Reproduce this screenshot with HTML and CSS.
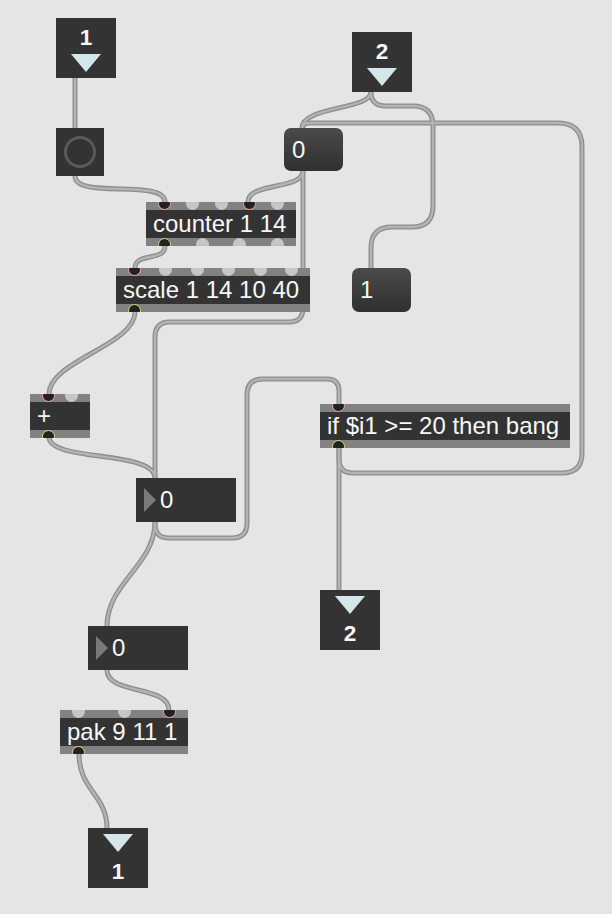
FILE: index.html
```html
<!DOCTYPE html>
<html>
<head>
<meta charset="utf-8">
<title>Patcher</title>
<link rel="stylesheet" href="styles.css">
</head>
<body>
<div class="patch">
  <svg class="cords" width="612" height="914" viewBox="0 0 612 914">
    <g class="outer">
      <path d="M75,78 V128"/>
      <path d="M75,176 C75,200 165,178 165,202"/>
      <path d="M371,92 C371,110 302,106 302,128"/>
      <path d="M371,92 Q371,106 386,106 H413 Q433,106 433,126 V206 Q433,227 412,227 H392 Q371,227 371,248 V268"/>
      <path d="M303,171 V308 Q303,322 289,322 H170 Q155,322 155,337 V478"/>
      <path d="M303,171 C303,190 248,182 248,202"/>
      <path d="M165,246 C165,262 135,252 135,268"/>
      <path d="M135,312 C135,345 49,361 49,394"/>
      <path d="M49,437 C49,462 155,450 155,478"/>
      <path d="M155,522 C155,565 107,583 107,626"/>
      <path d="M155,522 V524 Q155,538 169,538 H232 Q247,538 247,523 V395 Q247,379 263,379 H327 Q339,379 339,391 V404"/>
      <path d="M339,447 V459 Q339,473 353,473 H562 Q582,473 582,453 V147 Q582,123 558,123 H309 Q302,123 302,130"/>
      <path d="M339,447 V590"/>
      <path d="M107,670 C107,695 169,685 169,710"/>
      <path d="M79,754 C79,790 107,795 107,828"/>
    </g>
    <g class="inner">
      <path d="M75,78 V128"/>
      <path d="M75,176 C75,200 165,178 165,202"/>
      <path d="M371,92 C371,110 302,106 302,128"/>
      <path d="M371,92 Q371,106 386,106 H413 Q433,106 433,126 V206 Q433,227 412,227 H392 Q371,227 371,248 V268"/>
      <path d="M303,171 V308 Q303,322 289,322 H170 Q155,322 155,337 V478"/>
      <path d="M303,171 C303,190 248,182 248,202"/>
      <path d="M165,246 C165,262 135,252 135,268"/>
      <path d="M135,312 C135,345 49,361 49,394"/>
      <path d="M49,437 C49,462 155,450 155,478"/>
      <path d="M155,522 C155,565 107,583 107,626"/>
      <path d="M155,522 V524 Q155,538 169,538 H232 Q247,538 247,523 V395 Q247,379 263,379 H327 Q339,379 339,391 V404"/>
      <path d="M339,447 V459 Q339,473 353,473 H562 Q582,473 582,453 V147 Q582,123 558,123 H309 Q302,123 302,130"/>
      <path d="M339,447 V590"/>
      <path d="M107,670 C107,695 169,685 169,710"/>
      <path d="M79,754 C79,790 107,795 107,828"/>
    </g>
  </svg>

  <div class="node io in in1"><span class="num">1</span><span class="tri"></span></div>
  <div class="node io in in2"><span class="num">2</span><span class="tri"></span></div>

  <div class="node bang"><span class="ring"></span></div>

  <div class="node msg msg0">0</div>
  <div class="node msg msg1">1</div>

  <div class="node obj counter">
    <div class="strip top"><span class="port on"></span><span class="port"></span><span class="port"></span><span class="port on"></span><span class="port"></span></div>
    <div class="label">counter 1 14</div>
    <div class="strip bottom"><span class="port on"></span><span class="port"></span><span class="port"></span><span class="port"></span></div>
  </div>

  <div class="node obj scale">
    <div class="strip top"><span class="port on"></span><span class="port"></span><span class="port"></span><span class="port"></span><span class="port"></span><span class="port"></span></div>
    <div class="label">scale 1 14 10 40</div>
    <div class="strip bottom"><span class="port on"></span></div>
  </div>

  <div class="node obj plus">
    <div class="strip top"><span class="port on"></span><span class="port"></span></div>
    <div class="label">+</div>
    <div class="strip bottom"><span class="port on"></span></div>
  </div>

  <div class="node obj iff">
    <div class="strip top"><span class="port on"></span></div>
    <div class="label">if $i1 &gt;= 20 then bang</div>
    <div class="strip bottom"><span class="port on"></span></div>
  </div>

  <div class="node numbox num1"><span class="arrow"></span><span class="val">0</span></div>
  <div class="node numbox num2"><span class="arrow"></span><span class="val">0</span></div>

  <div class="node obj pak">
    <div class="strip top"><span class="port"></span><span class="port"></span><span class="port on"></span></div>
    <div class="label">pak 9 11 1</div>
    <div class="strip bottom"><span class="port on"></span></div>
  </div>

  <div class="node io out out2"><span class="tri"></span><span class="num">2</span></div>
  <div class="node io out out1"><span class="tri"></span><span class="num">1</span></div>
</div>
</body>
</html>
```

FILE: styles.css
```css
html, body {
  margin: 0;
  padding: 0;
  background: #e5e5e5;
}

.patch {
  position: relative;
  width: 612px;
  height: 914px;
  overflow: hidden;
  font-family: "Liberation Sans", Arial, sans-serif;
  color: #f7f7f7;
}

.cords {
  position: absolute;
  left: 0;
  top: 0;
}

.outer path {
  fill: none;
  stroke: #8d8d8d;
  stroke-width: 5;
}

.inner path {
  fill: none;
  stroke: #b3b3b3;
  stroke-width: 2.4;
}

.node {
  position: absolute;
  box-sizing: border-box;
}

/* inlet / outlet boxes */
.io {
  width: 60px;
  height: 60px;
  background: #333333;
  display: flex;
  flex-direction: column;
  align-items: center;
}

.io .num {
  font-weight: bold;
  font-size: 22.5px;
  line-height: 22px;
}

.io .tri {
  width: 0;
  height: 0;
  border-left: 15px solid transparent;
  border-right: 15px solid transparent;
  border-top: 18px solid #d3e7eb;
}

.io.in .num { margin-top: 9px; }
.io.in .tri { margin-top: 5px; }
.io.out .tri { margin-top: 6px; }
.io.out .num { margin-top: 9px; }

.in1 { left: 56px; top: 18px; }
.in2 { left: 352px; top: 32px; }
.out1 { left: 88px; top: 828px; }
.out2 { left: 320px; top: 590px; }

/* bang button */
.bang {
  left: 56px;
  top: 128px;
  width: 48px;
  height: 48px;
  background: #333333;
  display: flex;
  align-items: center;
  justify-content: center;
}

.ring {
  width: 32px;
  height: 32px;
  box-sizing: border-box;
  border: 3px solid #5a5a5a;
  border-radius: 50%;
}

/* message boxes */
.msg {
  width: 59px;
  height: 44px;
  border-radius: 7px;
  background: linear-gradient(#4a4a4a, #303030);
  font-size: 24px;
  line-height: 44px;
  padding-left: 8px;
}

.msg0 { left: 284px; top: 128px; height: 43px; line-height: 43px; }
.msg1 { left: 352px; top: 268px; }

/* objects */
.obj {
  height: 44px;
  background: #333333;
  display: flex;
  flex-direction: column;
}

.strip {
  height: 8px;
  flex: none;
  background: #828282;
  display: flex;
  justify-content: space-between;
  padding: 0 12px;
  overflow: hidden;
}

.port {
  flex: none;
  width: 13px;
  height: 13px;
  box-sizing: border-box;
  border-radius: 50%;
  background: #c6c6c6;
}

.top .port { margin-top: -5px; }
.bottom .port { margin-top: 0; }

.top .port.on {
  background: #222222;
  border: 1.5px solid #f0a793;
}

.bottom .port.on {
  background: #222222;
  border: 1.5px solid #dcdc78;
}

.label {
  height: 28px;
  line-height: 28px;
  padding-left: 7px;
  font-size: 24px;
  white-space: nowrap;
}

.counter { left: 146px; top: 202px; width: 150px; }
.scale { left: 116px; top: 268px; width: 194px; }
.plus { left: 30px; top: 394px; width: 60px; }
.iff { left: 320px; top: 404px; width: 250px; }
.pak { left: 60px; top: 710px; width: 128px; }

/* number boxes */
.numbox {
  width: 100px;
  height: 44px;
  background: #333333;
  display: flex;
  align-items: center;
  padding-left: 8px;
  gap: 4px;
}

.numbox .arrow {
  width: 0;
  height: 0;
  border-top: 12px solid transparent;
  border-bottom: 12px solid transparent;
  border-left: 12px solid #7a7a7a;
}

.numbox .val {
  font-size: 24px;
  line-height: 28px;
}

.num1 { left: 136px; top: 478px; }
.num2 { left: 88px; top: 626px; }
```
